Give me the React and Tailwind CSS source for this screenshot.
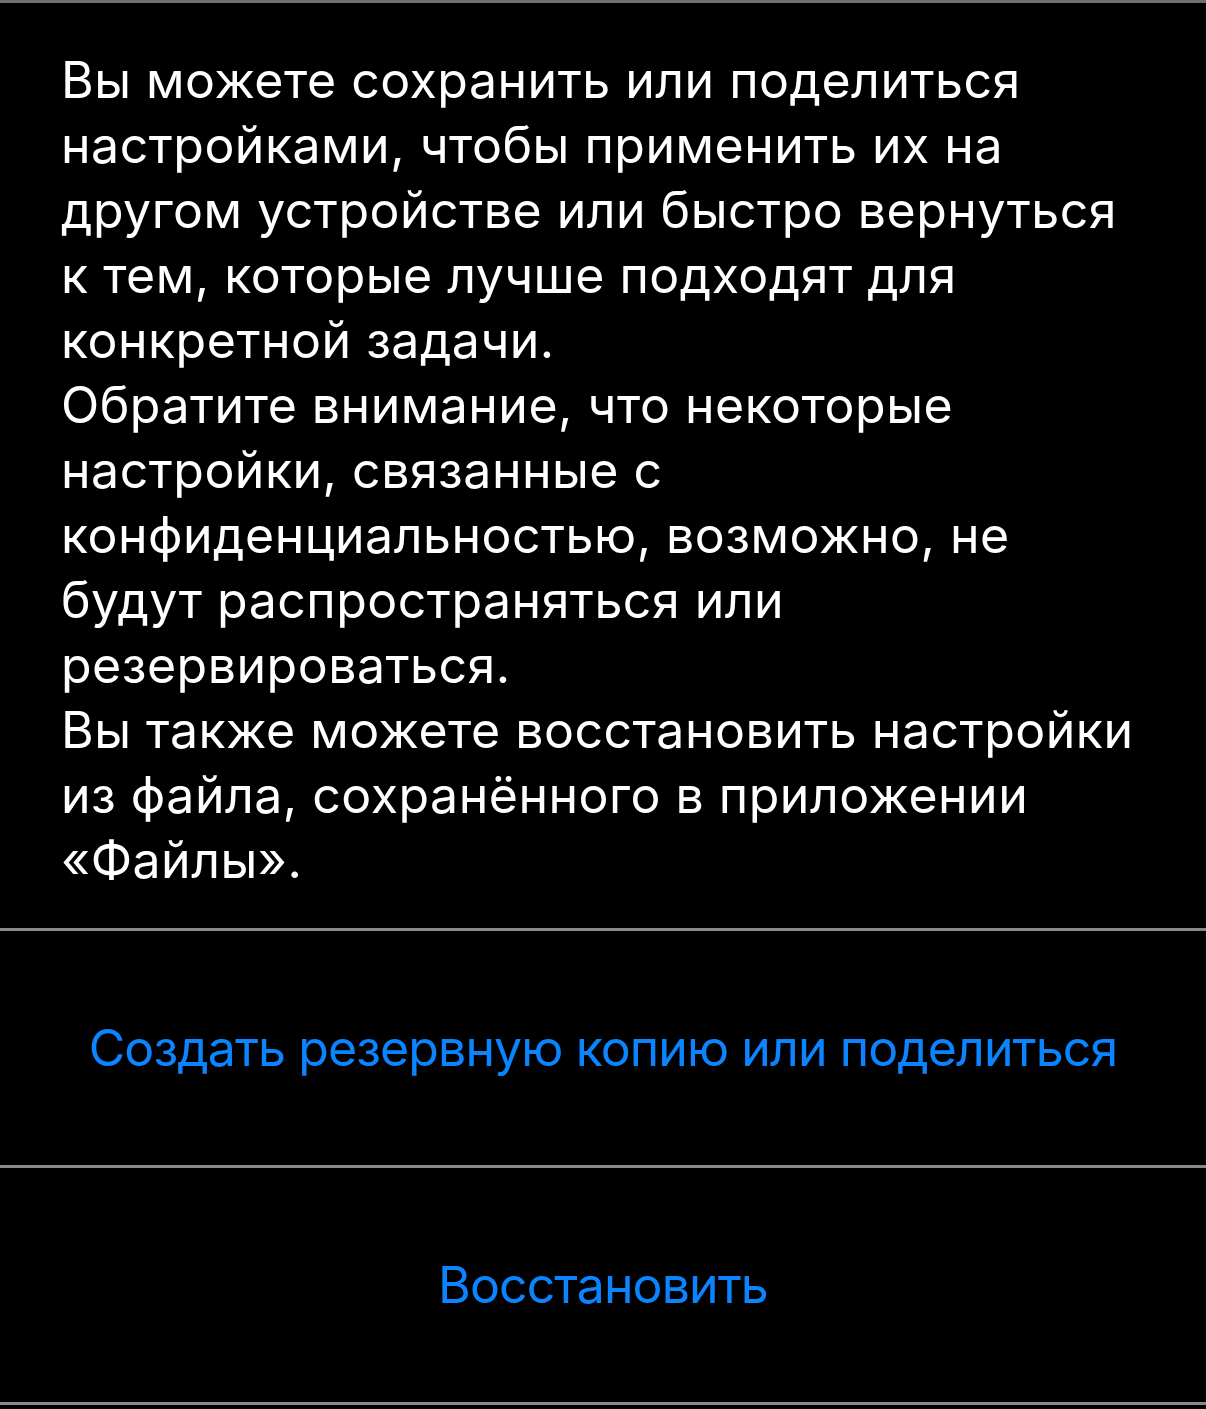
import React from 'react'

const lines = [
  'Вы можете сохранить или поделиться',
  'настройками, чтобы применить их на',
  'другом устройстве или быстро вернуться',
  'к тем, которые лучше подходят для',
  'конкретной задачи.',
  'Обратите внимание, что некоторые',
  'настройки, связанные с',
  'конфиденциальностью, возможно, не',
  'будут распространяться или',
  'резервироваться.',
  'Вы также можете восстановить настройки',
  'из файла, сохранённого в приложении',
  '«Файлы».',
]

const App = () => {
  return (
    <div className="min-h-[1409px] bg-black font-['Inter','Noto_Sans',sans-serif] text-[50px]">
      <div className="border-t-[3px] border-[#6f6f6f]" />
      <div className="pl-[61px] pt-[45px] pb-[35px] text-white leading-[65px] tracking-[0.5px]">
        {lines.map((l) => (
          <div key={l} className="whitespace-nowrap">{l}</div>
        ))}
      </div>
      <div className="border-t-[3px] border-[#8a8a8a]" />
      <button className="w-full h-[234px] flex items-center justify-center text-[#0a84ff] tracking-[-0.9px]">
        Создать резервную копию или поделиться
      </button>
      <div className="border-t-[3px] border-[#8a8a8a]" />
      <button className="w-full h-[234px] flex items-center justify-center text-[#0a84ff] tracking-[-0.9px]">
        Восстановить
      </button>
      <div className="border-t-[3px] border-[#8a8a8a]" />
    </div>
  )
}

export default App
